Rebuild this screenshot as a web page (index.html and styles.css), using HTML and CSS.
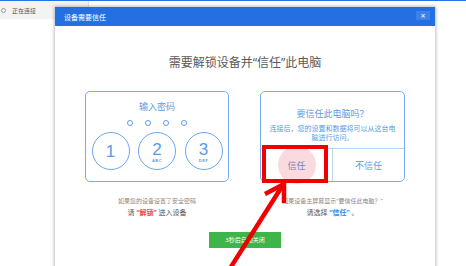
FILE: index.html
```html
<!DOCTYPE html>
<html lang="zh-CN">
<head>
<meta charset="utf-8">
<link rel="stylesheet" href="styles.css">
</head>
<body>
<div class="page">
  <div class="tabbar">
    <div class="tab"><span class="spin"></span><span class="tab-text">正在连接</span></div>
  </div>

  <div class="dialog">
    <div class="dlg-head">
      <span class="dlg-title">设备需要信任</span>
      <span class="close">×</span>
    </div>
    <div class="dlg-body">
      <h1 class="headline">需要解锁设备并“信任”此电脑</h1>
      <div class="cols">
        <div class="col">
          <div class="card pin">
            <div class="card-title">输入密码</div>
            <div class="dots"><i></i><i></i><i></i><i></i></div>
            <div class="keys">
              <div class="key"><span class="num">1</span></div>
              <div class="key"><span class="num up">2</span><span class="abc">ABC</span></div>
              <div class="key"><span class="num up">3</span><span class="abc">DEF</span></div>
            </div>
          </div>
          <p class="cap1">如果您的设备设置了安全密码</p>
          <p class="cap2">请 <b class="red">“解锁”</b> 进入设备</p>
        </div>
        <div class="col">
          <div class="card trust">
            <div class="card-title t2">要信任此电脑吗？</div>
            <p class="sub">连接后，您的设置和数据将可以从这台电<br>脑进行访问。</p>
            <div class="btns">
              <div class="btn yes"><span class="touch"></span><span class="lbl">信任</span></div>
              <div class="btn no"><span class="lbl">不信任</span></div>
            </div>
          </div>
          <p class="cap1">如果设备主屏幕显示“要信任此电脑？”</p>
          <p class="cap2">请选择 <b class="blue">“信任”</b> 。</p>
        </div>
      </div>
      <div class="ok">3秒后自动关闭</div>
    </div>
  </div>

  <svg class="annot" width="466" height="266" viewBox="0 0 466 266">
    <rect x="264" y="147" width="62" height="34" fill="none" stroke="#f00000" stroke-width="4"/>
    <line x1="229" y1="270" x2="281" y2="188" stroke="#f00000" stroke-width="4.5" stroke-linecap="round"/>
    <polyline points="265,194 284,184 284,203" fill="none" stroke="#f00000" stroke-width="4.5" stroke-linejoin="miter"/>
  </svg>
</div>
</body>
</html>
```

FILE: styles.css
```css
* { box-sizing: border-box; margin: 0; padding: 0; }
html, body { width: 466px; height: 266px; overflow: hidden; background: #fff; }
body {
  font-family: "Noto Sans", "Noto Sans CJK SC", sans-serif;
  color: #555;
}
.page {
  position: relative;
  width: 466px;
  height: 266px;
  border-top: 1.5px solid #2a73e6;
}
.tabbar {
  display: flex;
  height: 18px;
}
.tab {
  width: 89px;
  background: #f3f3f3;
  border-right: 1px solid #e2e2e2;
  display: flex;
  align-items: center;
  gap: 6px;
  padding-left: 1px;
}
.spin {
  width: 5px;
  height: 5px;
  border: 1px solid #999;
  border-radius: 50%;
}
.tab-text { font-size: 6px; color: #555; }

.dialog {
  position: absolute;
  left: 55px;
  top: 6px;
  width: 380px;
  height: 270px;
  background: #fff;
  box-shadow: 0 0 3px 1px rgba(0,0,0,0.25);
  display: flex;
  flex-direction: column;
}
.dlg-head {
  height: 19px;
  background: #2470e3;
  display: flex;
  align-items: center;
  justify-content: space-between;
  padding: 0 5px 0 9px;
}
.dlg-title { font-size: 7px; color: #fff; }
.close {
  width: 14px;
  height: 9px;
  background: #3d82ea;
  color: #fff;
  font-size: 8px;
  line-height: 9px;
  text-align: center;
  margin-top: -3px;
}
.dlg-body {
  display: flex;
  flex-direction: column;
  align-items: center;
  padding-top: 29px;
}
.headline {
  font-size: 12px;
  font-weight: 400;
  line-height: 16px;
  color: #5a5a5a;
}
.cols {
  margin-top: 20px;
  display: grid;
  grid-template-columns: 144px 145px;
  gap: 31px;
}
.col { display: flex; flex-direction: column; align-items: center; }
.card {
  width: 100%;
  height: 91px;
  border: 1.5px solid #72acf0;
  border-radius: 5px;
  display: flex;
  flex-direction: column;
  align-items: center;
}
.card-title {
  font-size: 9px;
  line-height: 11px;
  color: #5a9be8;
  margin-top: 9px;
}
.dots { display: flex; gap: 12px; margin-top: 8px; }
.dots i {
  width: 6px; height: 6px;
  border: 1.2px solid #5a9be8;
  border-radius: 50%;
}
.keys { display: flex; gap: 8.5px; margin-top: 6px; }
.key {
  width: 38px; height: 38px;
  border: 1.5px solid #6aa7ef;
  border-radius: 50%;
  display: flex;
  flex-direction: column;
  align-items: center;
  justify-content: center;
  color: #5a9be8;
}
.num { font-family: "Liberation Sans", sans-serif; font-size: 17px; line-height: 17px; font-weight: 300; }
.num.up { margin-top: 2px; }
.abc { font-family: "Liberation Sans", sans-serif; font-size: 4px; font-weight: 700; line-height: 5px; letter-spacing: 0.5px; }

.t2 { margin-top: 16px; }
.sub {
  font-size: 7px;
  line-height: 9px;
  color: #5a9be8;
  text-align: center;
  margin-top: 5px;
}
.btns {
  margin-top: auto;
  width: 100%;
  height: 33px;
  border-top: 1px solid #b9d5f5;
  display: grid;
  grid-template-columns: 72px 1fr;
}
.btn {
  position: relative;
  display: flex;
  align-items: center;
  justify-content: center;
  font-size: 9px;
  color: #5a9be8;
}
.yes { border-right: 1px solid #b9d5f5; }
.yes .lbl { color: #7a86b8; position: relative; }
.touch {
  position: absolute;
  left: 17px;
  top: -3px;
  width: 38px;
  height: 38px;
  border-radius: 50%;
  background: rgba(240, 150, 160, 0.35);
}
.cap1 {
  font-size: 6px;
  line-height: 8px;
  color: #888;
  margin-top: 15px;
}
.cap2 {
  font-size: 7px;
  line-height: 9px;
  color: #555;
  margin-top: 3px;
}
.red { color: #f04a3a; }
.blue { color: #2f86e8; }
.ok {
  margin-top: 15px;
  width: 72px;
  height: 16px;
  background: #3db54a;
  color: #fff;
  font-size: 6px;
  line-height: 16px;
  text-align: center;
}
.annot { position: absolute; left: 0; top: -1.5px; pointer-events: none; }
```
